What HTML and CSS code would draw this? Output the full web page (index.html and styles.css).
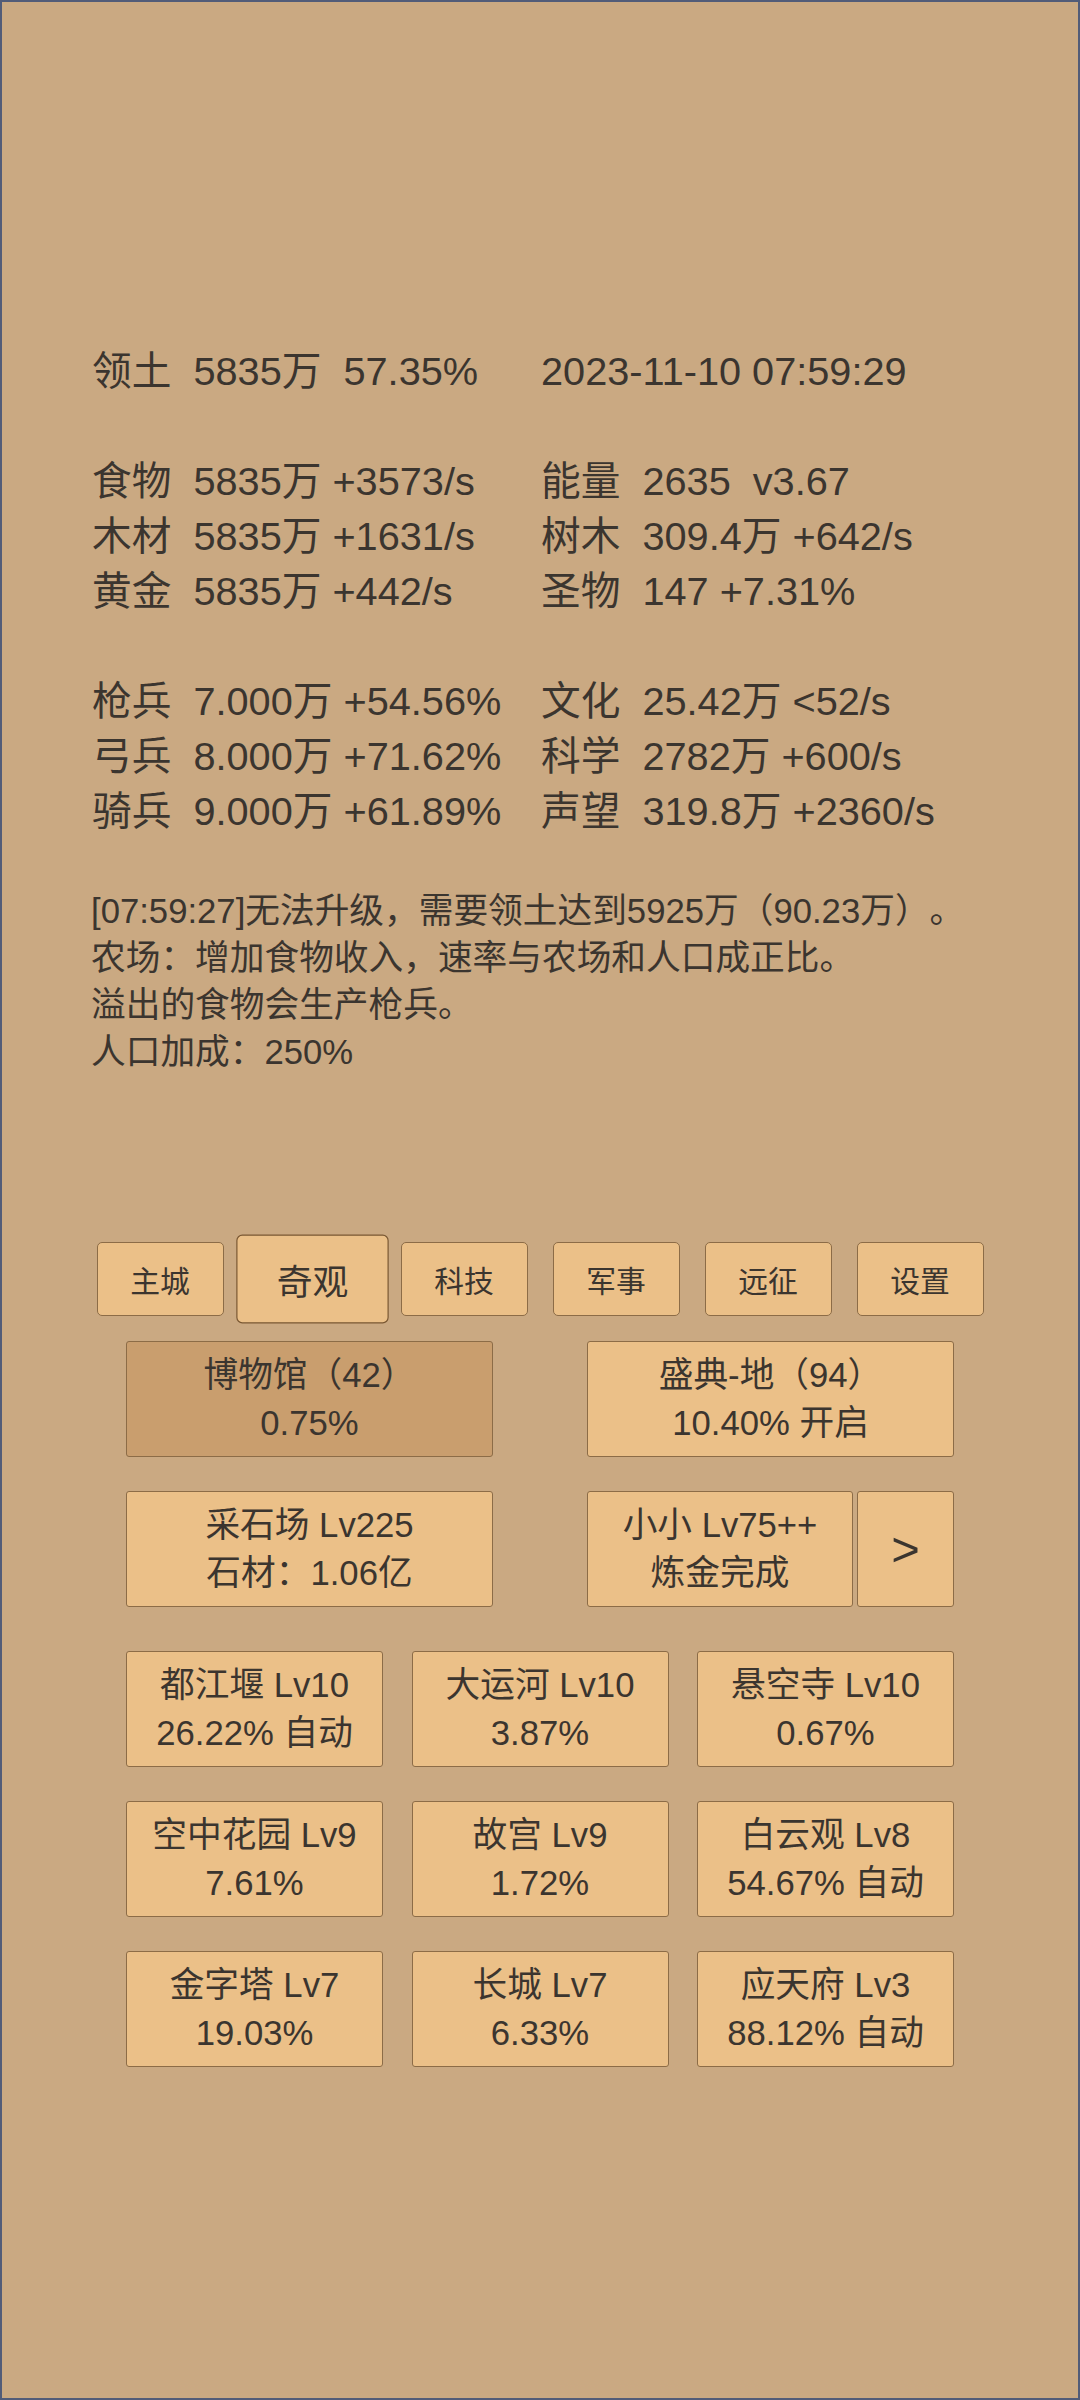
FILE: index.html
```html
<!DOCTYPE html>
<html lang="zh-CN">
<head>
<meta charset="utf-8">
<title>奇观</title>
<link rel="stylesheet" href="styles.css">
</head>
<body>
<div class="page">
  <section class="stats">
    <div class="row"><div class="cell">领土&nbsp;&nbsp;5835万&nbsp;&nbsp;57.35%</div><div class="cell">2023-11-10 07:59:29</div></div>
    <div class="row blank"></div>
    <div class="row"><div class="cell">食物&nbsp;&nbsp;5835万 +3573/s</div><div class="cell">能量&nbsp;&nbsp;2635&nbsp;&nbsp;v3.67</div></div>
    <div class="row"><div class="cell">木材&nbsp;&nbsp;5835万 +1631/s</div><div class="cell">树木&nbsp;&nbsp;309.4万 +642/s</div></div>
    <div class="row"><div class="cell">黄金&nbsp;&nbsp;5835万 +442/s</div><div class="cell">圣物&nbsp;&nbsp;147 +7.31%</div></div>
    <div class="row blank"></div>
    <div class="row"><div class="cell">枪兵&nbsp;&nbsp;7.000万 +54.56%</div><div class="cell">文化&nbsp;&nbsp;25.42万 &lt;52/s</div></div>
    <div class="row"><div class="cell">弓兵&nbsp;&nbsp;8.000万 +71.62%</div><div class="cell">科学&nbsp;&nbsp;2782万 +600/s</div></div>
    <div class="row"><div class="cell">骑兵&nbsp;&nbsp;9.000万 +61.89%</div><div class="cell">声望&nbsp;&nbsp;319.8万 +2360/s</div></div>
  </section>

  <section class="log">
    <div class="line">[07:59:27]无法升级，需要领土达到5925万（90.23万）。</div>
    <div class="line">农场：增加食物收入，速率与农场和人口成正比。</div>
    <div class="line">溢出的食物会生产枪兵。</div>
    <div class="line">人口加成：250%</div>
  </section>

  <nav class="tabs">
    <div class="tab">主城</div>
    <div class="tab active">奇观</div>
    <div class="tab">科技</div>
    <div class="tab">军事</div>
    <div class="tab">远征</div>
    <div class="tab">设置</div>
  </nav>

  <section class="pairs">
    <div class="pair-row">
      <div class="box wide selected"><div>博物馆（42）</div><div>0.75%</div></div>
      <div class="box wide"><div>盛典-地（94）</div><div>10.40% 开启</div></div>
    </div>
    <div class="pair-row">
      <div class="box wide"><div>采石场 Lv225</div><div>石材：1.06亿</div></div>
      <div class="group">
        <div class="box mid"><div>小小 Lv75++</div><div>炼金完成</div></div>
        <div class="box arrow">&gt;</div>
      </div>
    </div>
  </section>

  <section class="grid">
    <div class="box"><div>都江堰 Lv10</div><div>26.22% 自动</div></div>
    <div class="box"><div>大运河 Lv10</div><div>3.87%</div></div>
    <div class="box"><div>悬空寺 Lv10</div><div>0.67%</div></div>
    <div class="box"><div>空中花园 Lv9</div><div>7.61%</div></div>
    <div class="box"><div>故宫 Lv9</div><div>1.72%</div></div>
    <div class="box"><div>白云观 Lv8</div><div>54.67% 自动</div></div>
    <div class="box"><div>金字塔 Lv7</div><div>19.03%</div></div>
    <div class="box"><div>长城 Lv7</div><div>6.33%</div></div>
    <div class="box"><div>应天府 Lv3</div><div>88.12% 自动</div></div>
  </section>
</div>
</body>
</html>
```

FILE: styles.css
```css
* {
  box-sizing: border-box;
}

html, body {
  margin: 0;
  padding: 0;
}

body {
  width: 1080px;
  height: 2400px;
  background: #caa982;
  border: 2px solid #525c78;
  font-family: "Liberation Sans", "Noto Sans CJK SC", sans-serif;
  color: #3b352f;
  text-spacing-trim: space-all;
}

.page {
  padding-top: 342px;
}

.stats {
  padding-left: 90px;
  font-size: 39.7px;
  line-height: 55px;
}

.row {
  display: flex;
  height: 55px;
  white-space: nowrap;
}

.row .cell:first-child {
  width: 449px;
}

.log {
  margin-top: 49px;
  padding-left: 89px;
  font-size: 34.7px;
  line-height: 47px;
  white-space: nowrap;
}

.tabs {
  margin-top: 166px;
  display: flex;
  justify-content: center;
  gap: 25px;
}

.tab {
  width: 127px;
  height: 74px;
  display: flex;
  align-items: center;
  justify-content: center;
  background: #ebc088;
  border: 1px solid #8c6c47;
  border-radius: 5px;
  font-size: 29.8px;
  color: #3b352f;
}

.tab.active {
  transform: scale(1.2);
  border-color: #7a5833;
}

.pairs {
  margin-top: 25px;
  display: flex;
  flex-direction: column;
  gap: 34px;
  padding: 0 124px 0 124px;
}

.pair-row {
  display: flex;
  justify-content: space-between;
}

.box {
  height: 116px;
  background: #ebc088;
  border: 1px solid #8c6c47;
  border-radius: 3px;
  display: flex;
  flex-direction: column;
  align-items: center;
  justify-content: center;
  font-size: 34.7px;
  line-height: 48.5px;
  white-space: nowrap;
  text-align: center;
}

.box.wide {
  width: 367px;
}

.box.selected {
  background: #c99e6e;
}

.group {
  width: 367px;
  display: flex;
  gap: 4px;
}

.box.mid {
  width: 266px;
}

.box.arrow {
  width: 97px;
  font-size: 49px;
}

.grid {
  margin: 44px 124px 0 124px;
  display: grid;
  grid-template-columns: repeat(3, 257px);
  column-gap: 28.5px;
  row-gap: 34px;
}
```
